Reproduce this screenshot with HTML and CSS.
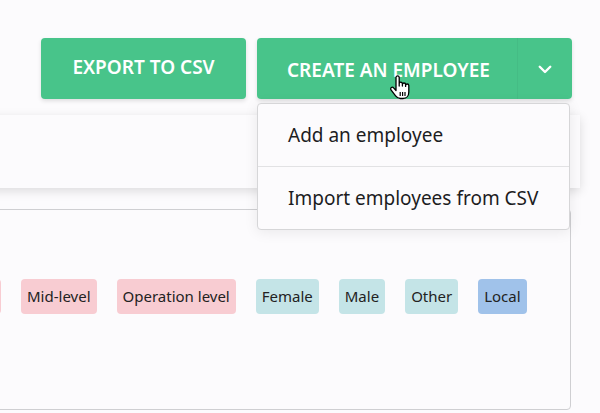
FILE: index.html
```html
<!DOCTYPE html>
<html lang="en">
<head>
<meta charset="UTF-8">
<meta name="viewport" content="width=device-width, initial-scale=1.0">
<title>Employees</title>
<link rel="stylesheet" href="styles.css">
</head>
<body>
<div class="page">
    <div class="toolbar">
        <button class="btn export">EXPORT TO CSV</button>
        <div class="split">
            <button class="btn split-main">CREATE AN EMPLOYEE</button>
            <button class="btn split-toggle">
                <svg width="18" height="18" viewBox="0 0 24 24"><path d="M5 9l7 7 7-7" fill="none" stroke="#fff" stroke-width="3.2" stroke-linecap="round" stroke-linejoin="round"/></svg>
            </button>
            <ul class="menu">
                <li class="menu-item">Add an employee</li>
                <li class="menu-item">Import employees from CSV</li>
            </ul>
            <svg class="cursor" width="22" height="26" viewBox="0 0 22 26">
                <path d="M7 2.5a1.6 1.6 0 0 1 3.2 0V11V8.8a1.6 1.6 0 0 1 3.2 0V11V9.6a1.6 1.6 0 0 1 3.2 0V11.4V10.6a1.6 1.6 0 0 1 3.2 0V17c0 3.8-2.4 6.5-5.8 6.5h-2.6c-2.2 0-3.6-1-4.8-2.6L2 14.8a1.6 1.6 0 0 1 2.6-1.9L7 15.5z" fill="#fff" stroke="#000" stroke-width="1.3" stroke-linejoin="round"/>
                <path d="M11.2 17v4M13.6 17v4M16 17v4" stroke="#000" stroke-width="1.2"/>
            </svg>
        </div>
    </div>

    <div class="filter-card"></div>

    <div class="panel">
        <div class="tags">
            <span class="tag pink edge"></span>
            <span class="tag pink">Mid-level</span>
            <span class="tag pink">Operation level</span>
            <span class="tag teal">Female</span>
            <span class="tag teal">Male</span>
            <span class="tag teal">Other</span>
            <span class="tag blue">Local</span>
        </div>
    </div>
</div>
</body>
</html>
```
FILE: styles.css
```css
body {
    margin: 0;
    font-family: "Noto Sans", sans-serif;
    background-color: #fcfbfd;
    overflow: hidden;
}

.page {
    width: 600px;
    height: 413px;
    position: relative;
}

.toolbar {
    display: flex;
    justify-content: flex-end;
    gap: 11px;
    padding: 38px 28px 0 0;
}

.btn {
    font-family: "Noto Sans", sans-serif;
    background-color: #48c48a;
    color: #fff;
    border: none;
    border-radius: 4px;
    font-size: 19px;
    font-weight: 600;
    height: 61px;
    padding: 0;
    box-shadow: 0 2px 4px rgba(0, 0, 0, 0.12);
    cursor: pointer;
}

.export {
    width: 205px;
    padding-bottom: 3px;
}

.split {
    display: flex;
    position: relative;
    border-radius: 4px;
    box-shadow: 0 2px 4px rgba(0, 0, 0, 0.12);
}

.split .btn {
    box-shadow: none;
}

.split-main {
    width: 260px;
    padding: 2px 0 0 30px;
    border-radius: 4px 0 0 4px;
    text-align: left;
    white-space: nowrap;
}

.split-toggle {
    width: 55px;
    border-radius: 0 4px 4px 0;
    border-left: 1px solid #45bc85;
    display: flex;
    align-items: center;
    justify-content: center;
}

.menu {
    position: absolute;
    top: 65px;
    left: 0;
    width: 311px;
    margin: 0;
    padding: 0;
    list-style: none;
    background-color: #fcfbfd;
    border: 1px solid #d6d6d8;
    border-radius: 4px;
    box-shadow: 0 2px 14px rgba(0, 0, 0, 0.08);
    z-index: 3;
}

.menu-item {
    height: 62px;
    line-height: 62px;
    padding-left: 30px;
    font-size: 19px;
    color: #1d1d1f;
}

.menu-item + .menu-item {
    border-top: 1px solid #e2e2e4;
}

.cursor {
    position: absolute;
    left: 132px;
    top: 37px;
    z-index: 4;
}

.filter-card {
    margin: 16px 0 0 -20px;
    width: 600px;
    height: 73px;
    background-color: #fcfbfd;
    box-shadow: 0 3px 10px rgba(0, 0, 0, 0.13);
}

.panel {
    margin: 21px 0 0 -10px;
    width: 581px;
    height: 201px;
    border: 1px solid #cfcfd2;
    border-radius: 4px;
    box-sizing: border-box;
}

.tags {
    display: flex;
    gap: 20px;
    padding-top: 69px;
}

.tag {
    height: 35px;
    line-height: 35px;
    padding: 0 6px;
    border-radius: 4px;
    font-size: 15px;
    color: #222;
}

.edge {
    width: 10px;
    padding: 0;
}

.pink {
    background-color: #f8ccd2;
}

.teal {
    background-color: #c4e4e7;
}

.blue {
    background-color: #a0c2ea;
}
```
